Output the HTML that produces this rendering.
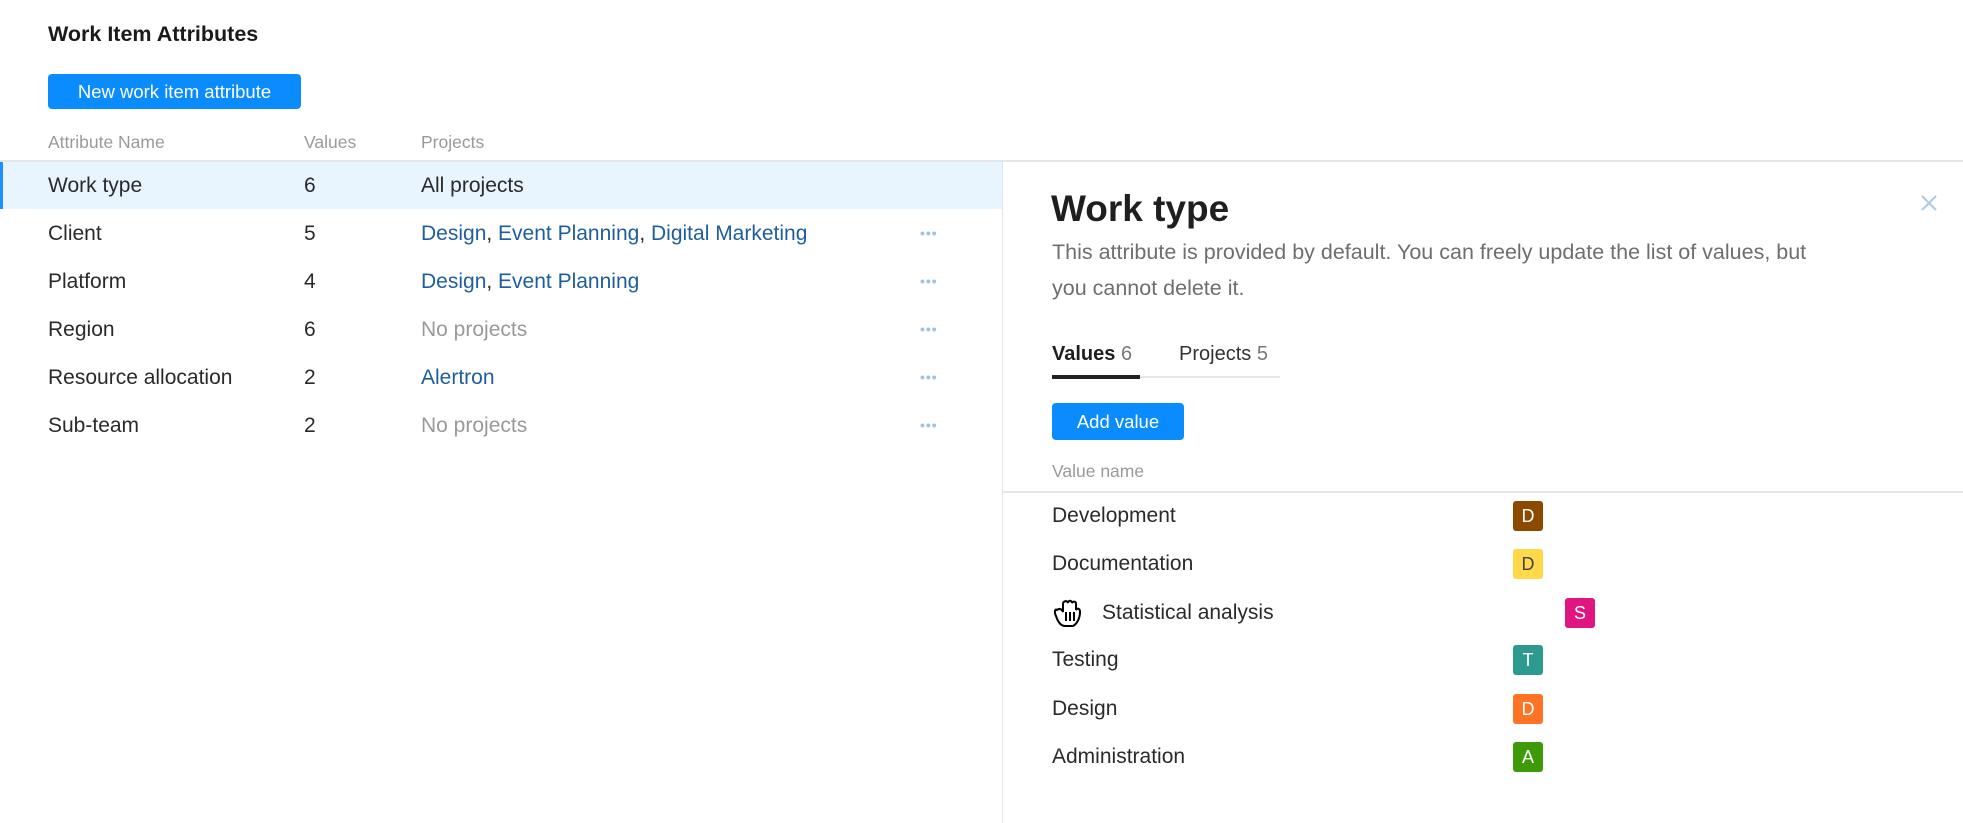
<!DOCTYPE html>
<html><head><meta charset="utf-8"><style>
*{margin:0;padding:0;box-sizing:border-box}
body{width:1963px;height:823px;background:#fff;font-family:"Liberation Sans",sans-serif;color:#222;position:relative;overflow:hidden}
.a{position:absolute;white-space:nowrap}
.btn{position:absolute;background:#0A8CFF;color:#fff;border-radius:4px;font-size:18.5px;display:flex;align-items:center;justify-content:center}
.h{color:#9a9a9a;font-size:17.5px}
.r{font-size:21px;color:#2a2a2a;transform:translateY(-50%)}
.l{color:#1E5E9E}
.g{color:#999}
.dots{position:absolute;color:#9CC3E5;font-size:14px;letter-spacing:1px;transform:translateY(-50%);font-weight:bold}
.b{position:absolute;width:30px;height:30px;border-radius:3px;color:#fff;font-size:18px;display:flex;align-items:center;justify-content:center;transform:translateY(-50%)}
</style></head><body>
<div class="a" style="left:48px;top:22px;font-size:21.5px;font-weight:bold;color:#1a1a1a">Work Item Attributes</div>
<div class="btn" style="left:48px;top:74px;width:253px;height:35px">New work item attribute</div>
<div class="a h" style="left:48px;top:132px">Attribute Name</div>
<div class="a h" style="left:304px;top:132px">Values</div>
<div class="a h" style="left:421px;top:132px">Projects</div>
<div class="a" style="left:0;top:160px;width:1963px;height:2px;background:#e3e7ec"></div>
<div class="a" style="left:0;top:162px;width:1002px;height:47px;background:#E8F4FE"></div>
<div class="a" style="left:0;top:162px;width:3px;height:47px;background:#1E8FFF"></div>
<div class="a" style="left:1002px;top:162px;width:1px;height:661px;background:#e3e7ec"></div>

<div class="a r" style="left:48px;top:186px">Work type</div><div class="a r" style="left:304px;top:186px">6</div><div class="a r" style="left:421px;top:186px">All projects</div>
<div class="a r" style="left:48px;top:234px">Client</div><div class="a r" style="left:304px;top:234px">5</div><div class="a r" style="left:421px;top:234px"><span class="l">Design</span>, <span class="l">Event Planning</span>, <span class="l">Digital Marketing</span></div><div class="dots" style="left:920px;top:233px">•••</div>
<div class="a r" style="left:48px;top:282px">Platform</div><div class="a r" style="left:304px;top:282px">4</div><div class="a r" style="left:421px;top:282px"><span class="l">Design</span>, <span class="l">Event Planning</span></div><div class="dots" style="left:920px;top:281px">•••</div>
<div class="a r" style="left:48px;top:330px">Region</div><div class="a r" style="left:304px;top:330px">6</div><div class="a r g" style="left:421px;top:330px">No projects</div><div class="dots" style="left:920px;top:329px">•••</div>
<div class="a r" style="left:48px;top:378px">Resource allocation</div><div class="a r" style="left:304px;top:378px">2</div><div class="a r l" style="left:421px;top:378px">Alertron</div><div class="dots" style="left:920px;top:377px">•••</div>
<div class="a r" style="left:48px;top:426px">Sub-team</div><div class="a r" style="left:304px;top:426px">2</div><div class="a r g" style="left:421px;top:426px">No projects</div><div class="dots" style="left:920px;top:425px">•••</div>

<div class="a" style="left:1051px;top:188px;font-size:37px;font-weight:bold;color:#1f1f1f">Work type</div>
<svg class="a" style="left:1920px;top:194px" width="18" height="18" viewBox="0 0 18 18"><path d="M2 2L16 16M16 2L2 16" stroke="#A9CBE6" stroke-width="2"/></svg>
<div class="a" style="left:1052px;top:234px;font-size:21.5px;line-height:36px;color:#6e6e6e;white-space:normal;width:765px">This attribute is provided by default. You can freely update the list of values, but you cannot delete it.</div>
<div class="a" style="left:1052px;top:343px;font-size:20px"><b style="color:#1f1f1f">Values</b> <span style="color:#777">6</span></div>
<div class="a" style="left:1179px;top:343px;font-size:20px;color:#333">Projects <span style="color:#777">5</span></div>
<div class="a" style="left:1052px;top:376px;width:228px;height:2px;background:#e5e7ea"></div>
<div class="a" style="left:1052px;top:375px;width:88px;height:4px;background:#222"></div>
<div class="btn" style="left:1052px;top:403px;width:132px;height:37px">Add value</div>
<div class="a h" style="left:1052px;top:461px">Value name</div>
<div class="a" style="left:1003px;top:491px;width:960px;height:2px;background:#e3e7ec"></div>

<div class="a r" style="left:1052px;top:516px">Development</div><div class="b" style="left:1513px;top:516px;background:#8B4A00">D</div>
<div class="a r" style="left:1052px;top:564px">Documentation</div><div class="b" style="left:1513px;top:564px;background:#FFD94A;color:#444">D</div>
<div class="a r" style="left:1102px;top:613px">Statistical analysis</div><div class="b" style="left:1565px;top:613px;background:#E0157F">S</div>
<svg class="a" style="left:1051px;top:596px" width="34" height="36" viewBox="0 0 34 36"><path d="M6 14C4 12 3 16 5 20C7 26 10 30 14 30L22 30C26 28 29 22 29 16C29 12 26 12 25 14L25 8C25 5 22 5 21 7C21 4 17 4 17 7C16 4 12 5 12 8L12 16C11 13 8 12 6 14Z" fill="#fff" stroke="#000" stroke-width="2"/><path d="M15 16V25M19 16V25M23 16V25" stroke="#000" stroke-width="2"/></svg>
<div class="a r" style="left:1052px;top:660px">Testing</div><div class="b" style="left:1513px;top:660px;background:#2E9A8F">T</div>
<div class="a r" style="left:1052px;top:709px">Design</div><div class="b" style="left:1513px;top:709px;background:#FF7325">D</div>
<div class="a r" style="left:1052px;top:757px">Administration</div><div class="b" style="left:1513px;top:757px;background:#3F9A0A">A</div>
</body></html>
